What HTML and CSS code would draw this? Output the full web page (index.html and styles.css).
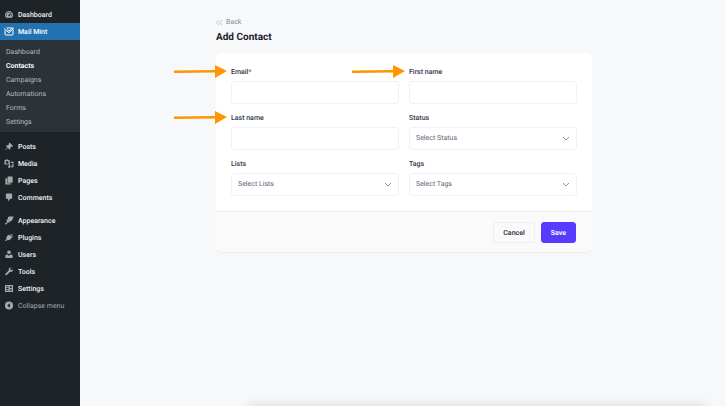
FILE: index.html
```html
<!DOCTYPE html>
<html lang="en">
<head>
<meta charset="utf-8">
<meta name="viewport" content="width=device-width, initial-scale=1">
<title>Add Contact</title>
<link rel="stylesheet" href="styles.css">
</head>
<body>
<div class="layout">
  <nav class="sidebar" aria-label="Admin menu">
    <ul class="menu">
      <li><a class="menu-link" href="#"><svg class="icon" viewBox="0 0 20 20"><path fill-rule="evenodd" d="M3.800 17a8.500 8.500 0 1 1 12.400 0zM9 4v2.500h2V4zM4.500 6.200 6 7.800l1.300-1.300-1.600-1.600zM3 10v2h2.500v-2zm11.500 0v2H17v-2zm-.2-5.200L10.500 10a2 2 0 1 0 1.800 1l3.300-5z"/></svg>Dashboard</a></li>
      <li><a class="menu-link is-current" href="#"><svg class="icon icon-mail" viewBox="0 0 20 18"><path d="M5 2h14M2 7v7q0 2 2 2h12q2 0 2-2V5M0 3l8 7q2 2 4 0l7-8M6 5l4 3 5-4"/></svg>Mail Mint</a>
        <ul class="submenu">
          <li><a class="submenu-link" href="#">Dashboard</a></li>
          <li><a class="submenu-link is-active" href="#">Contacts</a></li>
          <li><a class="submenu-link" href="#">Campaigns</a></li>
          <li><a class="submenu-link" href="#">Automations</a></li>
          <li><a class="submenu-link" href="#">Forms</a></li>
          <li><a class="submenu-link" href="#">Settings</a></li>
        </ul>
      </li>
    </ul>
    <ul class="menu">
      <li><a class="menu-link" href="#"><svg class="icon" viewBox="0 0 20 20"><path d="m11 1 8 8-1.500 1.500-1.800-.3-3 3c.5 1.800.1 3-.9 4L7.500 13.500 2 18.500l-.6-.6L6.500 12 2.800 8.600c1-1 2.300-1.300 4-.8l3-3L9.500 2.500z"/></svg>Posts</a></li>
      <li><a class="menu-link" href="#"><svg class="icon" viewBox="0 0 20 20"><path fill-rule="evenodd" d="M0 3h2l1-2h5l1 2h3v9H0zm6 1.500a3 3 0 1 0 0 6 3 3 0 0 0 0-6zM14 6h6v10.500a2.500 2.500 0 1 1-2-2.400V9h-4zM10 13h3v4a2.500 2.500 0 1 1-3-2z"/></svg>Media</a></li>
      <li><a class="menu-link" href="#"><svg class="icon" viewBox="0 0 20 20"><path d="M7 1h11v14H7zM2 5h4v11h8v3H2z"/></svg>Pages</a></li>
      <li><a class="menu-link" href="#"><svg class="icon" viewBox="0 0 20 20"><path d="M5 1h10q2 0 2 2v8q0 2-2 2h-2l-5 6v-6H5q-2 0-2-2V3q0-2 2-2z"/></svg>Comments</a></li>
    </ul>
    <ul class="menu">
      <li><a class="menu-link" href="#"><svg class="icon" viewBox="0 0 20 20"><path d="M8 2c3-2 7 0 12-1-1 3-1 6-4 9l-3 3-6-5zM6 7l6 6-2 2-2-1c-2 2-3 5-6 5-3-2 2-4 4-7L4 9z"/></svg>Appearance</a></li>
      <li><a class="menu-link" href="#"><svg class="icon" viewBox="0 0 20 20"><path d="m12.500 5.500 4-4 1.500 1.500-4 4 1.500 1.500 2.500-2.500 1.300 1.300L13 14c-2 2-5 2.500-7 1.500L3.500 18H1.800v-2L4.500 13.500C3.500 11 4 8.500 6 6.500L8.500 4z"/></svg>Plugins</a></li>
      <li><a class="menu-link" href="#"><svg class="icon" viewBox="0 0 20 20"><circle cx="10" cy="5" r="4"/><path d="M2 18v-5q0-3 4-3l4 3 4-3q4 0 4 3v5z"/></svg>Users</a></li>
      <li><a class="menu-link" href="#"><svg class="icon" viewBox="0 0 20 20"><path d="M17 6.500 13.500 7 13 3.500 15.500 1C11 0 8 4 9.500 7.500L2 15q-1 1.500.5 2.800T5 18l7.500-7.500C16 12 20 9 19 4.500z"/></svg>Tools</a></li>
      <li><a class="menu-link" href="#"><svg class="icon" viewBox="0 0 20 20"><path fill-rule="evenodd" d="M1 2h18v16H1zm3 3v2h5V5zm0 4v2h5V9zm0 4v2h5v-2zM12 5v4h4V5zm0 6v1.500h4V11zm0 3v1.500h4V14z"/></svg>Settings</a></li>
      <li><button class="menu-link collapse" type="button"><svg class="icon" viewBox="0 0 20 20"><path fill-rule="evenodd" d="M10 1a9 9 0 1 0 0 18 9 9 0 0 0 0-18zm2 4v10l-6-5z"/></svg>Collapse menu</button></li>
    </ul>
  </nav>

  <main class="main">
    <div class="content">
      <a class="back" href="#"><svg class="back-icon" viewBox="0 0 12 12"><path d="M5.500 1.500 1 6l4.500 4.500M11 1.500 6.500 6l4.500 4.500"/></svg>Back</a>
      <h1 class="title">Add Contact</h1>
      <form class="card">
        <div class="fields">
          <div class="field">
            <label class="label" for="email">Email<span class="required">*</span></label>
            <input class="control" id="email" type="email">
            <svg class="arrow" viewBox="0 0 53 13"><path d="M0 5.500 41 5V0l12 6-12 7V7.500L0 8z"/></svg>
          </div>
          <div class="field">
            <label class="label" for="first-name">First name</label>
            <input class="control" id="first-name" type="text">
            <svg class="arrow" viewBox="0 0 53 13"><path d="M0 5.500 41 5V0l12 6-12 7V7.500L0 8z"/></svg>
          </div>
          <div class="field">
            <label class="label" for="last-name">Last name</label>
            <input class="control" id="last-name" type="text">
            <svg class="arrow" viewBox="0 0 53 13"><path d="M0 5.500 41 5V0l12 6-12 7V7.500L0 8z"/></svg>
          </div>
          <div class="field">
            <label class="label" for="status">Status</label>
            <div class="select-wrap">
              <select class="control" id="status"><option>Select Status</option></select>
              <svg class="chevron" viewBox="0 0 8 6"><path d="m1 1 3 3 3-3"/></svg>
            </div>
          </div>
          <div class="field">
            <label class="label" for="lists">Lists</label>
            <div class="select-wrap">
              <select class="control" id="lists"><option>Select Lists</option></select>
              <svg class="chevron" viewBox="0 0 8 6"><path d="m1 1 3 3 3-3"/></svg>
            </div>
          </div>
          <div class="field">
            <label class="label" for="tags">Tags</label>
            <div class="select-wrap">
              <select class="control" id="tags"><option>Select Tags</option></select>
              <svg class="chevron" viewBox="0 0 8 6"><path d="m1 1 3 3 3-3"/></svg>
            </div>
          </div>
        </div>
        <div class="actions">
          <button class="button" type="button">Cancel</button>
          <button class="button button-primary" type="submit">Save</button>
        </div>
      </form>
    </div>
    <div class="bottom-shade"></div>
  </main>
</div>
</body>
</html>
```

FILE: styles.css
```css
* {
  box-sizing: border-box;
}

body {
  margin: 0;
  font-family: Roboto, Inter, "Liberation Sans", sans-serif;
  font-size: 7px;
  text-rendering: geometricPrecision;
  color: #2d3748;
  background: #f6f8fa;
}

a {
  color: inherit;
  text-decoration: none;
}

button,
input,
select {
  font: inherit;
  text-rendering: inherit;
}

.layout {
  display: flex;
  min-height: 100vh;
}

/* Sidebar */
.sidebar {
  flex: none;
  width: 80px;
  padding-top: 6px;
  background: #1d2327;
  color: #f0f0f1;
}

.menu,
.submenu {
  margin: 0;
  padding: 0;
  list-style: none;
}

.menu + .menu {
  margin-top: 6px;
}

.menu-link {
  display: flex;
  align-items: center;
  gap: 4px;
  width: 100%;
  height: 17px;
  padding: 0 4px;
  font-weight: 500;
  white-space: nowrap;
}

.menu-link.is-current {
  background: #2271b1;
  color: #fff;
}

.icon {
  flex: none;
  width: 10px;
  height: 9px;
  fill: #a7aaad;
}

.icon-mail {
  overflow: visible;
  fill: none;
  stroke: #fff;
  stroke-width: 2;
}

.collapse {
  border: 0;
  background: none;
  color: #a7aaad;
  font-weight: 400;
}

.submenu {
  padding: 5px 0 3px;
  background: #2c3338;
}

.submenu-link {
  display: block;
  padding: 0 6px;
  line-height: 14px;
  color: #b4b9be;
}

.submenu-link.is-active {
  color: #fff;
  font-weight: 600;
}

/* Page */
.main {
  position: relative;
  flex: 1;
  min-width: 0;
  padding: 16px 0 16px 2px;
  overflow: hidden;
}

.content {
  max-width: 376px;
  margin: 0 auto;
}

.back {
  display: inline-flex;
  align-items: center;
  gap: 3px;
  height: 12px;
  font-weight: 500;
  color: #9a9fb0;
}

.back-icon {
  width: 7px;
  height: 7px;
  fill: none;
  stroke: currentColor;
}

.title {
  margin: 3px 0 8px;
  font-size: 10px;
  line-height: 14px;
  font-weight: 700;
  color: #1a202c;
}

.card {
  border-radius: 5px;
  background: #fff;
  box-shadow: 0 1px 1px rgba(30, 40, 60, 0.05);
}

.fields {
  display: grid;
  grid-template-columns: 1fr 1fr;
  gap: 7px 10px;
  padding: 12px 15px 15px;
}

.field {
  position: relative;
}

.label {
  display: block;
  margin-bottom: 2px;
  line-height: 14px;
  font-weight: 500;
}

.required {
  color: #f03e3e;
}

.control {
  display: block;
  width: 100%;
  height: 23px;
  padding: 0 6px 1px;
  border: 1px solid #f1f2f5;
  border-radius: 3px;
  background: #fff;
  color: #5d6678;
  appearance: none;
}

.select-wrap {
  position: relative;
}

.chevron {
  position: absolute;
  top: 9px;
  right: 7px;
  width: 8px;
  height: 6px;
  fill: none;
  stroke: #8d94a3;
  pointer-events: none;
}

.arrow {
  position: absolute;
  top: 0;
  right: 100%;
  width: 53px;
  height: 13px;
  margin-right: 4px;
  fill: #ff9500;
}

.actions {
  display: flex;
  justify-content: flex-end;
  gap: 6px;
  padding: 10px 16px 9px;
  border-top: 1px solid #edeff2;
  border-radius: 0 0 5px 5px;
  background: #fafafa;
}

.button {
  height: 21px;
  padding: 0 9px;
  border: 1px solid #eeeff2;
  border-radius: 3px;
  background: #fafafa;
  color: #2d3748;
  font-weight: 600;
}

.button-primary {
  border-color: #573bff;
  background: #573bff;
  color: #fff;
}

.bottom-shade {
  position: absolute;
  top: 100%;
  left: 26%;
  right: 3%;
  height: 10px;
  box-shadow: 0 0 12px rgba(0, 0, 0, 0.14);
}
```
